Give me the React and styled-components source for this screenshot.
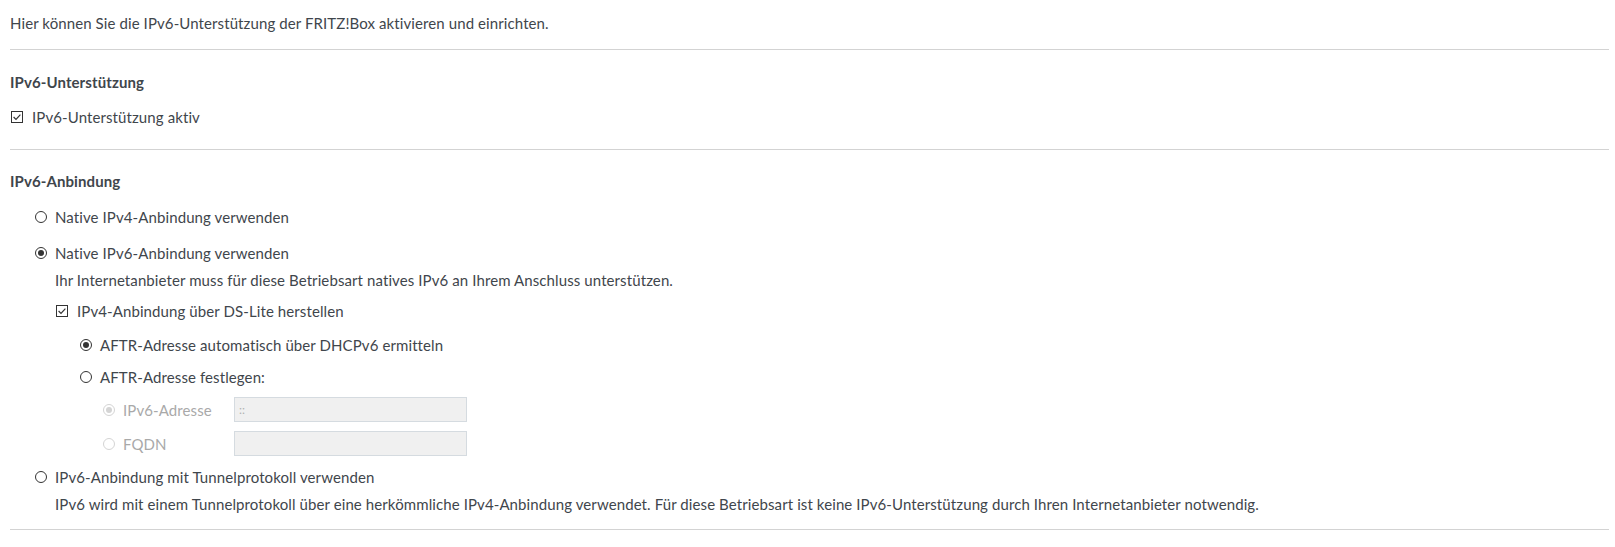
import React from 'react';
import styled, { createGlobalStyle } from 'styled-components';

const GlobalStyle = createGlobalStyle`
  html, body {
    margin: 0;
    padding: 0;
    background: #fff;
  }
  body {
    font-family: Lato, "Open Sans", sans-serif;
    font-size: 15px;
    letter-spacing: 0.1px;
    color: #3f464c;
  }
`;

const Page = styled.div`
  padding: 13px 6px 0 10px;
`;

const Intro = styled.p`
  margin: 0 0 16px;
  line-height: 20px;
`;

const Divider = styled.hr`
  margin: 0;
  border: 0;
  border-top: 1px solid #d3d3d3;
`;

const Section = styled.section`
  padding: ${p => p.$top}px 0 ${p => p.$bottom}px;
`;

const Heading = styled.h4`
  margin: 0;
  font-size: 15px;
  font-weight: 700;
  line-height: 20px;
`;

const Indent = styled.div`
  padding-left: ${p => p.$by}px;
`;

const Option = styled.label`
  display: flex;
  align-items: center;
  gap: ${p => p.$gap ?? 8}px;
  line-height: 20px;
  margin-top: ${p => p.$mt ?? 0}px;
  padding-left: ${p => p.$pl ?? 0}px;
  color: ${p => (p.$disabled ? '#a9a9a9' : 'inherit')};
`;

const Note = styled.p`
  margin: ${p => p.$mt ?? 0}px 0 0;
  line-height: 20px;
`;

const Box = styled.span`
  flex: none;
  width: 12px;
  height: 12px;
  box-sizing: border-box;
  border: 1px solid #333;
  background: #fff;
  display: inline-flex;
  align-items: center;
  justify-content: center;

  svg {
    display: block;
  }
`;

const Ring = styled.span`
  flex: none;
  width: 12px;
  height: 12px;
  box-sizing: border-box;
  border-radius: 50%;
  border: 1px solid ${p => (p.$disabled ? '#d4d4d4' : '#333')};
  background: #fff;
  display: inline-flex;
  align-items: center;
  justify-content: center;

  &::after {
    content: '';
    display: ${p => (p.$checked ? 'block' : 'none')};
    width: 6px;
    height: 6px;
    border-radius: 50%;
    background: ${p => (p.$disabled ? '#d4d4d4' : '#333')};
  }
`;

const FieldRow = styled.div`
  display: grid;
  grid-template-columns: 12px 103px 233px;
  column-gap: 8px;
  align-items: center;
  height: 25px;
  margin-top: ${p => p.$mt ?? 0}px;
  color: #a9a9a9;
`;

const TextField = styled.input`
  box-sizing: border-box;
  width: 233px;
  height: 25px;
  margin: 0;
  padding: 0 4px;
  border: 1px solid #d5dbe0;
  background: #f0f0f0;
  font-family: inherit;
  font-size: 12px;
  color: #b0b0b0;
  outline: none;
`;

const Check = () => (
  <Box>
    <svg width="10" height="10" viewBox="0 0 10 10">
      <polyline points="1.6,5 4,7.4 8.4,2.6" fill="none" stroke="#333" strokeWidth="1.2" />
    </svg>
  </Box>
);

const Radio = ({ checked, disabled }) => <Ring $checked={checked} $disabled={disabled} />;

export default function App() {
  return (
    <>
      <GlobalStyle />
      <Page>
        <Intro>Hier können Sie die IPv6-Unterstützung der FRITZ!Box aktivieren und einrichten.</Intro>
        <Divider />

        <Section $top={22} $bottom={22}>
          <Heading>IPv6-Unterstützung</Heading>
          <Option $mt={15} $pl={1} $gap={9}>
            <Check />
            IPv6-Unterstützung aktiv
          </Option>
        </Section>
        <Divider />

        <Section $top={21} $bottom={15}>
          <Heading>IPv6-Anbindung</Heading>
          <Indent $by={25}>
            <Option $mt={16}>
              <Radio />
              Native IPv4-Anbindung verwenden
            </Option>
            <Option $mt={16}>
              <Radio checked />
              Native IPv6-Anbindung verwenden
            </Option>
            <Indent $by={20}>
              <Note $mt={7}>
                Ihr Internetanbieter muss für diese Betriebsart natives IPv6 an Ihrem Anschluss unterstützen.
              </Note>
              <Option $mt={11} $pl={1} $gap={9}>
                <Check />
                IPv4-Anbindung über DS-Lite herstellen
              </Option>
              <Indent $by={25}>
                <Option $mt={14}>
                  <Radio checked />
                  AFTR-Adresse automatisch über DHCPv6 ermitteln
                </Option>
                <Option $mt={12}>
                  <Radio />
                  AFTR-Adresse festlegen:
                </Option>
                <Indent $by={23}>
                  <FieldRow $mt={10}>
                    <Radio checked disabled />
                    <span>IPv6-Adresse</span>
                    <TextField disabled readOnly value="::" />
                  </FieldRow>
                  <FieldRow $mt={9}>
                    <Radio disabled />
                    <span>FQDN</span>
                    <TextField disabled readOnly value="" />
                  </FieldRow>
                </Indent>
              </Indent>
            </Indent>
            <Option $mt={11}>
              <Radio />
              IPv6-Anbindung mit Tunnelprotokoll verwenden
            </Option>
            <Indent $by={20}>
              <Note $mt={7}>
                IPv6 wird mit einem Tunnelprotokoll über eine herkömmliche IPv4-Anbindung verwendet. Für diese Betriebsart ist keine IPv6-Unterstützung durch Ihren Internetanbieter notwendig.
              </Note>
            </Indent>
          </Indent>
        </Section>
        <Divider />
      </Page>
    </>
  );
}
